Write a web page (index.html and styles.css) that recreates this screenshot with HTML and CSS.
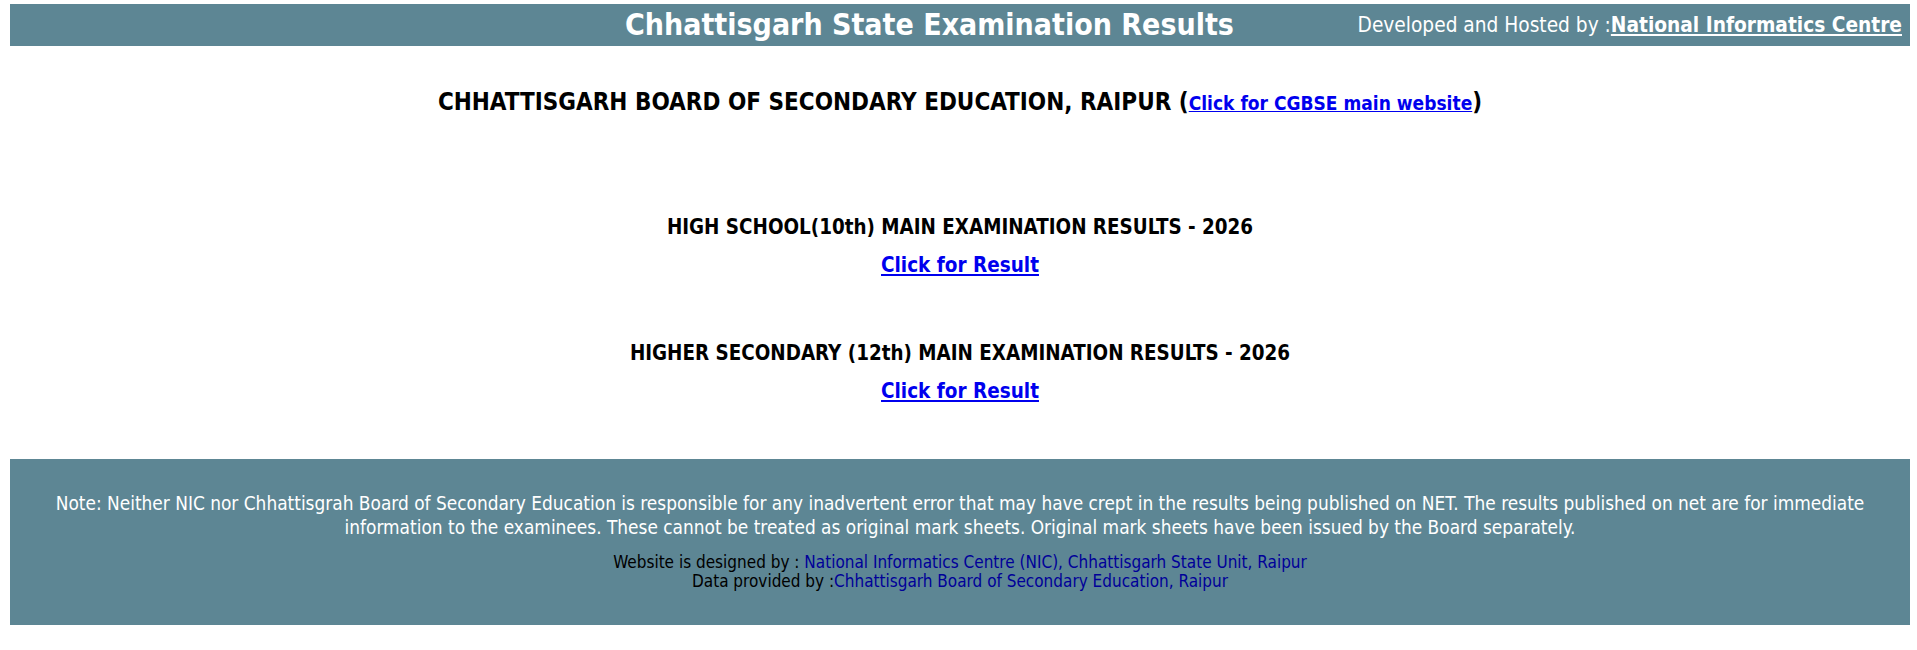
FILE: index.html
```html
<!DOCTYPE html>
<html lang="en">
<head>
<meta charset="utf-8">
<title>Chhattisgarh State Examination Results</title>
<link rel="stylesheet" href="styles.css">
</head>
<body>
<header class="topbar">
  <div class="site-title">Chhattisgarh State Examination Results</div>
  <div class="hosted">Developed and Hosted by :<a href="#" class="hosted-link">National Informatics Centre</a></div>
</header>
<main class="content">
  <h1 class="board">CHHATTISGARH BOARD OF SECONDARY EDUCATION, RAIPUR (<a href="#" class="board-link">Click for CGBSE main website</a>)</h1>
  <section class="exam exam-first">
    <h2 class="exam-title">HIGH SCHOOL(10th) MAIN EXAMINATION RESULTS - 2026</h2>
    <a href="#" class="result-link">Click for Result</a>
  </section>
  <section class="exam exam-second">
    <h2 class="exam-title">HIGHER SECONDARY (12th) MAIN EXAMINATION RESULTS - 2026</h2>
    <a href="#" class="result-link">Click for Result</a>
  </section>
</main>
<footer class="footer">
  <p class="note">Note: Neither NIC nor Chhattisgrah Board of Secondary Education is responsible for any inadvertent error that may have crept in the results being published on NET. The results published on net are for immediate information to the examinees. These cannot be treated as original mark sheets. Original mark sheets have been issued by the Board separately.</p>
  <div class="credits">
    <div>Website is designed by : <a href="#" class="credit-link">National Informatics Centre (NIC), Chhattisgarh State Unit, Raipur</a></div>
    <div>Data provided by :<a href="#" class="credit-link">Chhattisgarh Board of Secondary Education, Raipur</a></div>
  </div>
</footer>
</body>
</html>
```
FILE: styles.css
```css
html, body {
  background: #ffffff;
}
body {
  margin: 4px 7px 0 10px;
  font-family: "DejaVu Sans Condensed", "DejaVu Sans", sans-serif;
  color: #000000;
}
.topbar {
  height: 42px;
  background: #5d8694;
  display: flex;
  align-items: center;
  color: #ffffff;
}
.site-title {
  margin-left: 615px;
  font-size: 30px;
  font-weight: bold;
  line-height: 36px;
  white-space: nowrap;
}
.hosted {
  margin-left: auto;
  padding-right: 8px;
  font-size: 20.7px;
  line-height: 26px;
  white-space: nowrap;
}
.hosted-link {
  color: #ffffff;
  font-weight: bold;
  text-decoration: underline;
}
.content {
  text-align: center;
}
.board {
  margin: 42px 0 0 0;
  font-size: 24px;
  line-height: 29px;
  font-weight: bold;
}
.board-link {
  font-size: 19px;
  color: #0000ee;
  text-decoration: underline;
}
.exam {
  display: flex;
  flex-direction: column;
  align-items: center;
}
.exam-first {
  margin-top: 97px;
}
.exam-second {
  margin-top: 64px;
}
.exam-title {
  margin: 0;
  font-size: 20.4px;
  line-height: 24px;
  font-weight: bold;
}
.result-link {
  margin-top: 14px;
  font-size: 20.5px;
  line-height: 24px;
  font-weight: bold;
  color: #0000ee;
  text-decoration: underline;
}
.footer {
  margin-top: 56px;
  height: 166px;
  box-sizing: border-box;
  background: #5d8694;
  padding: 32px 20px 0 20px;
  text-align: center;
}
.note {
  margin: 0;
  color: #ffffff;
  font-size: 18.9px;
  line-height: 24px;
}
.credits {
  margin-top: 14px;
  font-size: 17px;
  line-height: 19px;
  color: #000000;
}
.credit-link {
  color: #000099;
  text-decoration: none;
}
```
